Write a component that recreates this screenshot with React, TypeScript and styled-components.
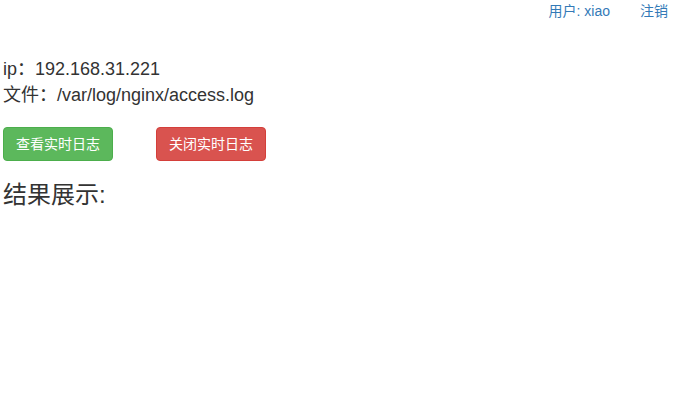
import React from "react";
import styled, { createGlobalStyle } from "styled-components";

const Global = createGlobalStyle`
  html, body { margin: 0; padding: 0; background: #fff; }
  body {
    font-family: "Liberation Sans", Arial, "Noto Sans CJK SC", sans-serif;
    font-size: 14px;
    line-height: 1.42857;
    color: #333;
  }
`;

const Page = styled.div`
  padding: 0 3px;
`;

const TopBar = styled.div`
  display: flex;
  justify-content: flex-end;
  gap: 30px;
  padding: 2px 24px 0 0;
  height: 20px;
`;

const TopLink = styled.a`
  color: #337ab7;
  text-decoration: none;
  font-size: 14px;
`;

const Info = styled.div`
  margin-top: 34px;
  font-size: 18px;
  line-height: 26px;
`;

const Buttons = styled.div`
  display: flex;
  gap: 43px;
  margin-top: 19px;
`;

const Btn = styled.button<{ $variant: "success" | "danger" }>`
  font-family: inherit;
  font-size: 14px;
  line-height: 20px;
  padding: 6px 0;
  width: 110px;
  height: 34px;
  white-space: nowrap;
  text-align: center;
  color: #fff;
  border: 1px solid ${(p) => (p.$variant === "success" ? "#4cae4c" : "#d43f3a")};
  background: ${(p) => (p.$variant === "success" ? "#5cb85c" : "#d9534f")};
  border-radius: 4px;
  cursor: pointer;
`;

const Heading = styled.h3`
  margin: 21px 0 0;
  font-size: 24px;
  font-weight: 400;
  line-height: 1.1;
`;

export default function App() {
  return (
    <Page>
      <Global />
      <TopBar>
        <TopLink href="#">用户: xiao</TopLink>
        <TopLink href="#">注销</TopLink>
      </TopBar>
      <Info>
        <div>ip：192.168.31.221</div>
        <div>文件：/var/log/nginx/access.log</div>
      </Info>
      <Buttons>
        <Btn $variant="success">查看实时日志</Btn>
        <Btn $variant="danger">关闭实时日志</Btn>
      </Buttons>
      <Heading>结果展示:</Heading>
    </Page>
  );
}
